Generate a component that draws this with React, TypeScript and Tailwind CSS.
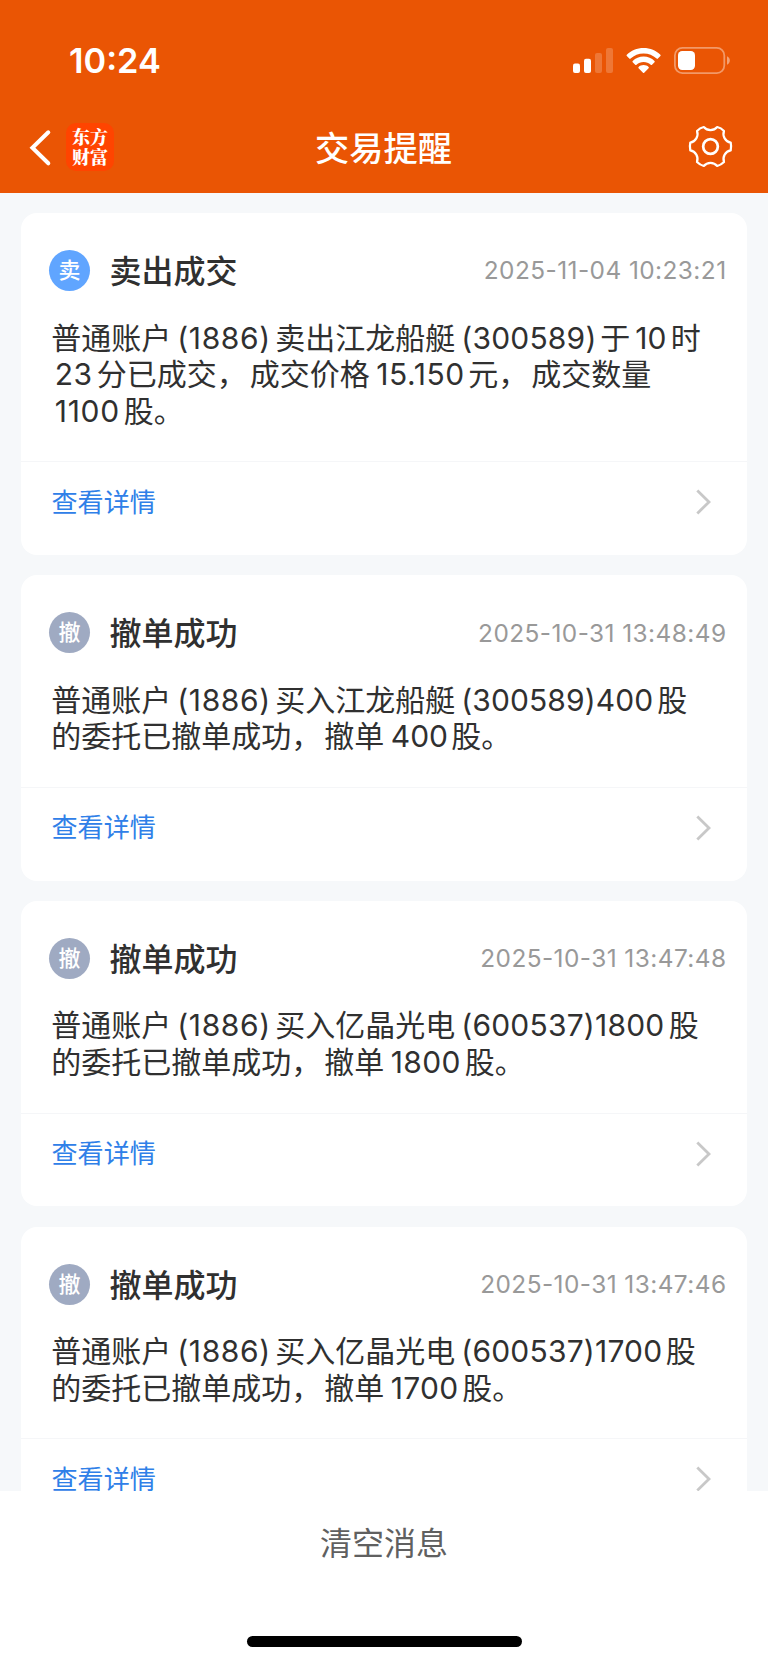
import { Fragment } from "react";

type Run = string | { n: string; cls: string };

type Notice = {
  badge: string;
  badgeColor: string;
  title: string;
  time: string;
  lines: Run[][];
};

const account: Run = { n: "(1886)", cls: "w-[104px] pl-[6px] tracking-[0.6px]" };

const notices: Notice[] = [
  {
    badge: "卖",
    badgeColor: "bg-[#60a5ff]",
    title: "卖出成交",
    time: "2025-11-04 10:23:21",
    lines: [
      [
        "普通账户",
        account,
        "卖出江龙船艇",
        { n: "(300589)", cls: "w-[145px] pl-[6px] tracking-[0.2px]" },
        "于",
        { n: "10", cls: "w-[40.5px] pl-[5px]" },
        "时",
      ],
      [
        { n: "23", cls: "w-[45.5px] pl-[3.5px] tracking-[0.3px]" },
        "分已成交，成交价格",
        { n: "15.150", cls: "w-[98.5px] pl-[6.5px] tracking-[0.55px]" },
        "元，成交数量",
      ],
      [{ n: "1100", cls: "w-[72.5px] pl-[3.5px] tracking-[0.7px]" }, "股。"],
    ],
  },
  {
    badge: "撤",
    badgeColor: "bg-[#9faac2]",
    title: "撤单成功",
    time: "2025-10-31 13:48:49",
    lines: [
      [
        "普通账户",
        account,
        "买入江龙船艇",
        { n: "(300589)400", cls: "w-[202px] pl-[6px] tracking-[0.1px]" },
        "股",
      ],
      ["的委托已撤单成功，撤单", { n: "400", cls: "w-[67px] pl-[6.5px]" }, "股。"],
    ],
  },
  {
    badge: "撤",
    badgeColor: "bg-[#9faac2]",
    title: "撤单成功",
    time: "2025-10-31 13:47:48",
    lines: [
      [
        "普通账户",
        account,
        "买入亿晶光电",
        { n: "(600537)1800", cls: "w-[213.5px] pl-[6px] tracking-[0.2px]" },
        "股",
      ],
      ["的委托已撤单成功，撤单", { n: "1800", cls: "w-[80.5px] pl-[6.5px] tracking-[0.3px]" }, "股。"],
    ],
  },
  {
    badge: "撤",
    badgeColor: "bg-[#9faac2]",
    title: "撤单成功",
    time: "2025-10-31 13:47:46",
    lines: [
      [
        "普通账户",
        account,
        "买入亿晶光电",
        { n: "(600537)1700", cls: "w-[210.5px] pl-[6px] tracking-[0.2px]" },
        "股",
      ],
      ["的委托已撤单成功，撤单", { n: "1700", cls: "w-[78px] pl-[6.5px] tracking-[0.3px]" }, "股。"],
    ],
  },
];

function Han({ text }: { text: string }) {
  const parts = text.split("，");
  return (
    <>
      {parts.map((p, i) => (
        <Fragment key={i}>
          {i > 0 && <span className="inline-block w-[33px]">，</span>}
          {p}
        </Fragment>
      ))}
    </>
  );
}

function StatusBar() {
  return (
    <div className="flex h-[102px] items-start justify-between pr-[37.5px] pl-[69px]">
      <div className="mt-[40px] font-[Inter,sans-serif] text-[34.3px] leading-[41px] font-semibold">10:24</div>
      <div className="mt-[47px] flex items-start">
        <svg width="41" height="27" viewBox="0 0 41 27" fill="white">
          <rect x="0" y="16.5" width="7" height="9.5" rx="2" />
          <rect x="11" y="11.8" width="7" height="14.2" rx="2" />
          <rect x="22" y="6" width="7" height="20" rx="2" opacity="0.2" />
          <rect x="33" y="1" width="7" height="25" rx="2" opacity="0.2" />
        </svg>
        <svg className="ml-[12px]" width="36" height="27" viewBox="0 0 36 27" fill="white">
          <path d="M17.6 1 C24.2 1 30.2 3.4 34.4 7.8 C34.8 8.2 34.8 8.7 34.4 9.1 L31.9 11.6 C31.5 12 31 12 30.6 11.6 C27.1 8.3 22.6 6.4 17.6 6.4 C12.6 6.4 8.1 8.3 4.6 11.6 C4.2 12 3.7 12 3.3 11.6 L0.8 9.1 C0.4 8.7 0.4 8.2 0.8 7.8 C5 3.4 11 1 17.6 1 Z" />
          <path d="M17.6 9.6 C21.9 9.6 25.7 11.2 28.5 13.9 C28.9 14.3 28.9 14.8 28.5 15.2 L26 17.7 C25.6 18.1 25.1 18 24.7 17.7 C22.8 16 20.3 15 17.6 15 C14.9 15 12.4 16 10.5 17.7 C10.1 18 9.6 18.1 9.2 17.7 L6.7 15.2 C6.3 14.8 6.3 14.3 6.7 13.9 C9.5 11.2 13.3 9.6 17.6 9.6 Z" />
          <path d="M17.6 18 C19.6 18 21.3 18.7 22.6 19.9 C23 20.3 23 20.8 22.6 21.2 L18.2 25.7 C17.8 26.1 17.4 26.1 17 25.7 L12.6 21.2 C12.2 20.8 12.2 20.3 12.6 19.9 C13.9 18.7 15.6 18 17.6 18 Z" />
        </svg>
        <svg className="ml-[12px]" width="57" height="27" viewBox="0 0 57 27" fill="none">
          <rect x="0.9" y="0.9" width="49.4" height="25.2" rx="7.5" stroke="white" strokeOpacity="0.4" strokeWidth="1.8" />
          <rect x="4" y="4" width="17" height="19" rx="4.2" fill="white" />
          <path d="M53 9.3 C54.8 10 55.8 11.6 55.8 13.5 C55.8 15.4 54.8 17 53 17.7 Z" fill="white" opacity="0.45" />
        </svg>
      </div>
    </div>
  );
}

function NavBar() {
  return (
    <div className="grid h-[90px] grid-cols-[1fr_auto_1fr] items-start">
      <div className="flex items-start pl-[28px]">
        <svg className="mt-[26px]" width="24" height="40" viewBox="0 0 24 40" fill="none">
          <path d="M20.3 4.3 L4.4 19.8 L20.3 35.3" stroke="white" strokeWidth="4" strokeLinecap="round" strokeLinejoin="miter" />
        </svg>
        <div className="mt-[21px] ml-[14px] flex h-[48px] w-[48px] flex-col items-center rounded-[10px] bg-[#ff4400] pt-[2.5px] font-['Noto_Serif_CJK_SC','Noto_Sans_CJK_SC',sans-serif] text-[18px] leading-[20.5px] font-black">
          <span>东方</span>
          <span>财富</span>
        </div>
      </div>
      <h1 className="mt-[18.5px] -ml-px text-[34.2px] leading-[50px] font-medium">交易提醒</h1>
      <svg className="mt-[21.5px] mr-[35.3px] justify-self-end" width="45" height="45" viewBox="-70.5 -70.5 141 141" fill="none" stroke="white" strokeWidth="7">
        <path
          strokeLinejoin="round"
          d="M-21 -61 C-10 -48 10 -48 21 -61 Q33 -58 42.3 -48.7 C36.6 -32.7 46.6 -15.3 63.3 -12.3 Q66 0 63.3 12.3 C46.6 15.3 36.6 32.7 42.3 48.7 Q33 58 21 61 C10 48 -10 48 -21 61 Q-33 58 -42.3 48.7 C-36.6 32.7 -46.6 15.3 -63.3 12.3 Q-66 0 -63.3 -12.3 C-46.6 -15.3 -36.6 -32.7 -42.3 -48.7 Q-33 -58 -21 -61 Z"
        />
        <circle r="23" strokeWidth="8.5" />
      </svg>
    </div>
  );
}

function Card({ item }: { item: Notice }) {
  return (
    <article className="shrink-0 rounded-[16px] bg-white">
      <header className="flex h-[78px] items-end justify-between pr-[20.5px] pl-[28px]">
        <div className="flex items-center">
          <div className={`flex h-[41px] w-[41px] items-start justify-center rounded-full text-[22px] leading-[37.5px] font-medium text-white ${item.badgeColor}`}>
            {item.badge}
          </div>
          <h2 className="ml-[19.5px] h-[41px] text-[32px] leading-[38px] font-medium">{item.title}</h2>
        </div>
        <time className="font-[Inter,sans-serif] text-[24.4px] leading-[40.6px] tracking-[0.44px] text-[#999999]">{item.time}</time>
      </header>
      <div className="pt-[26.5px] pb-[34px] pl-[30.3px] text-[30px] leading-[36.6px]">
        {item.lines.map((line, i) => (
          <p key={i} className="h-[36.6px] whitespace-nowrap">
            {line.map((run, j) =>
              typeof run === "string" ? (
                <Han key={j} text={run} />
              ) : (
                <span key={j} className={`inline-block font-[Inter,sans-serif] ${run.cls}`}>
                  {run.n}
                </span>
              ),
            )}
          </p>
        ))}
      </div>
      <footer className="flex h-[93.8px] items-start justify-between border-t border-[#f5f6f8] pr-[35px] pl-[30.5px]">
        <a className="mt-[18.5px] text-[26.1px] leading-[40px] text-[#2f80e8]">查看详情</a>
        <svg className="mt-[26px]" width="17" height="28" viewBox="0 0 17 28" fill="none">
          <path d="M2.3 2.6 L14 14 L2.3 25.4" stroke="#c8c8c8" strokeWidth="2.8" />
        </svg>
      </footer>
    </article>
  );
}

export default function App() {
  return (
    <div className="flex h-[1663px] w-[768px] flex-col overflow-hidden bg-[#f6f8fa] font-['Noto_Sans_CJK_SC',sans-serif] text-[#303030]">
      <div className="h-[192.5px] shrink-0 bg-[#ea5504] text-white">
        <StatusBar />
        <NavBar />
      </div>
      <main className="flex min-h-0 flex-1 flex-col gap-[20.2px] overflow-hidden px-[21px] pt-[20.5px]">
        {notices.map((n) => (
          <Card key={n.time} item={n} />
        ))}
      </main>
      <div className="flex h-[172px] shrink-0 flex-col items-center bg-white">
        <button className="mt-[24.5px] text-[32px] leading-[50px] text-[#606060]">清空消息</button>
        <div className="mt-[70.5px] h-[11px] w-[275px] rounded-full bg-black" />
      </div>
    </div>
  );
}
